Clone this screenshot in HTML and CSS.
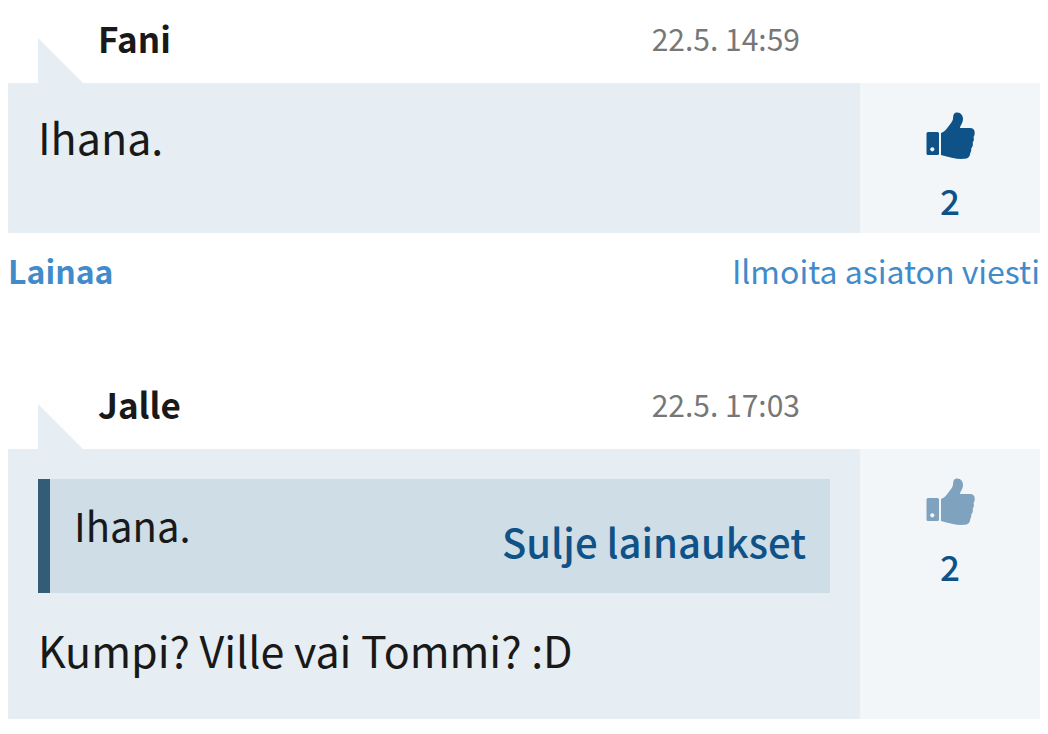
FILE: index.html
```
<!DOCTYPE html>
<html lang="fi">
<head>
    <meta charset="UTF-8">
    <meta name="viewport" content="width=device-width, initial-scale=1.0">
    <title>Keskustelu</title>
    <link rel="stylesheet" href="styles.css">
</head>
<body>
    <svg class="symbols" aria-hidden="true">
        <symbol id="thumb" viewBox="-1 0 50 48">
            <path fill-rule="evenodd" d="M2 20H11.500A1.500 1.500 0 0 1 13 21.500V41.500A1.500 1.500 0 0 1 11.500 43H2A1.500 1.500 0 0 1 0.500 41.500V21.500A1.500 1.500 0 0 1 2 20zM6.300 35.200a2.100 2.100 0 1 0 0.010 0z"/>
            <path d="M15 21C18 20 20 18 22 15C24 12 26.500 10 27 7C27.300 3 27.500 0.500 31.300 0.500C35 0.500 37 3.500 37 7C37 11 34 14 34 16H44C47 16 48.700 17.500 48.700 20.500C48.700 23 48.300 24 47.500 25C48.200 27 48 29 46.700 30.500C47.300 33 46.500 35 45.200 36.500C45.500 38 45 40 44.300 41C44 44.500 42.500 46.500 39 46.800C31 47.500 24 45.500 15 43Z"/>
        </symbol>
    </svg>
    <article class="message">
        <header class="message-header">
            <span class="author">Fani</span>
            <time class="time">22.5. 14:59</time>
        </header>
        <div class="message-body">
            <div class="content">
                <p class="text">Ihana.</p>
            </div>
            <div class="likes">
                <button class="like" type="button" aria-label="Tykkää"><svg class="thumb"><use href="#thumb"/></svg></button>
                <span class="count">2</span>
            </div>
        </div>
        <footer class="message-footer">
            <a href="#" class="reply">Lainaa</a>
            <a href="#" class="report">Ilmoita asiaton viesti</a>
        </footer>
    </article>
    <article class="message">
        <header class="message-header">
            <span class="author">Jalle</span>
            <time class="time">22.5. 17:03</time>
        </header>
        <div class="message-body">
            <div class="content">
                <blockquote class="quote">
                    <p class="quote-text">Ihana.</p>
                    <button class="quote-toggle" type="button">Sulje lainaukset</button>
                </blockquote>
                <p class="text">Kumpi? Ville vai Tommi? :D</p>
            </div>
            <div class="likes">
                <button class="like faded" type="button" aria-label="Tykkää"><svg class="thumb"><use href="#thumb"/></svg></button>
                <span class="count">2</span>
            </div>
        </div>
    </article>
</body>
</html>
```
FILE: styles.css
```
*{
    box-sizing: border-box;
}
body{
    margin: 0;
    padding: 0 8px;
    background: #ffffff;
    color: #191919;
    font-family: "Noto Sans CJK SC", sans-serif;
}
p, blockquote{
    margin: 0;
}
a{
    color: #428bca;
    text-decoration: none;
}
button{
    padding: 0;
    border: 0;
    background: none;
    font-family: inherit;
    cursor: pointer;
}
.symbols{
    display: none;
}
.message + .message{
    margin-top: 69px;
}
.message-header{
    position: relative;
    display: flex;
    justify-content: space-between;
    align-items: center;
    height: 83px;
    padding: 0 240px 8px 90px;
}
.message-header::before{
    content: "";
    position: absolute;
    left: 30px;
    bottom: 0;
    border-left: 45px solid #e6edf3;
    border-top: 45px solid transparent;
}
.author{
    font-size: 35px;
    line-height: 54px;
    font-weight: bold;
}
.time{
    color: #777777;
    font-size: 30px;
    line-height: 52px;
}
.message-body{
    display: flex;
}
.content{
    flex: 1;
    min-height: 150px;
    padding: 30px;
    background: #e6edf3;
}
.text{
    margin-bottom: 17px;
    font-size: 43px;
    line-height: 46px;
}
.likes{
    display: flex;
    flex-direction: column;
    align-items: center;
    width: 180px;
    padding-top: 29px;
    background: #f2f6f9;
    color: #0f5287;
}
.like{
    color: inherit;
    line-height: 0;
}
.thumb{
    width: 50px;
    height: 48px;
    fill: currentColor;
}
.faded{
    opacity: 0.5;
}
.count{
    margin-top: 15px;
    font-size: 35px;
    line-height: 50px;
    font-weight: 500;
}
.message-footer{
    display: flex;
    justify-content: space-between;
    padding-top: 10px;
    font-size: 32px;
    line-height: 54px;
}
.reply{
    font-weight: bold;
}
.quote{
    display: flex;
    justify-content: space-between;
    margin-bottom: 33px;
    padding: 16px 24px 22px;
    border-left: 12px solid #335c77;
    background: #cfdde6;
}
.quote-text{
    font-size: 40px;
    line-height: 60px;
}
.quote-toggle{
    margin-top: 16px;
    color: #0f5287;
    font-size: 40px;
    line-height: 60px;
    font-weight: 500;
}
```
